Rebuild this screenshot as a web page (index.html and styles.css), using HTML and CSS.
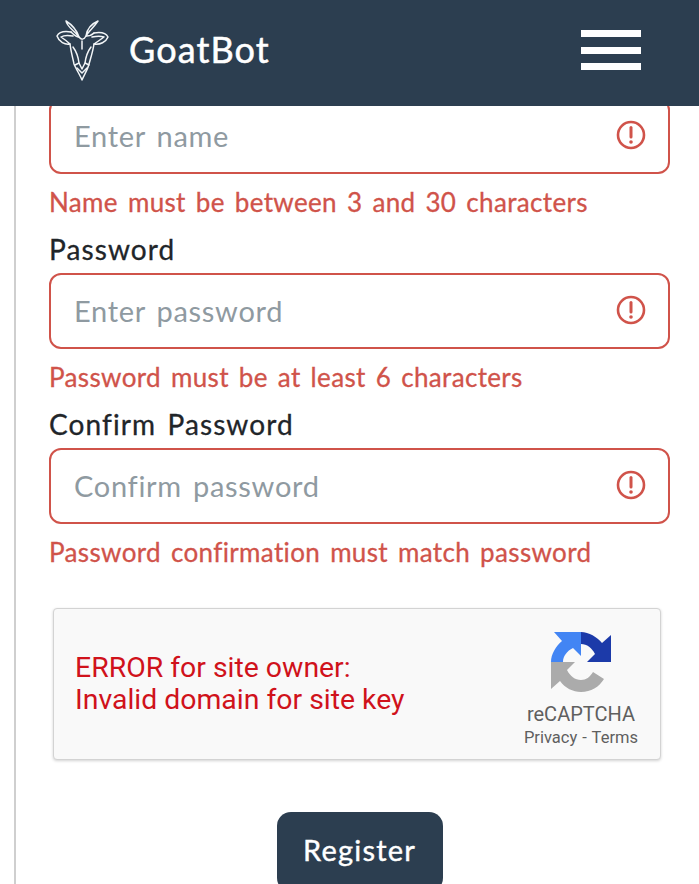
FILE: index.html
```html
<!DOCTYPE html>
<html lang="en">
<head>
<meta charset="utf-8">
<title>GoatBot</title>
<link rel="stylesheet" href="styles.css">
</head>
<body>
<header class="topbar">
  <a class="brand">
    <svg class="goat" viewBox="0 0 53 62" fill="none" stroke="#f2f5f7" stroke-width="1.5" stroke-linejoin="round" stroke-linecap="round">
      <path d="M10 2C11 8 18 11 23 18C21 12 18 7 10 2Z"/>
      <path d="M42 2C35 5 31 10 30 17C33 12 38 8 42 2Z"/>
      <path d="M15 13C9 12 3 13 1 17C3 23 9 26 14 25C11 22 8 20 5 18C8 16 12 16 17 17"/>
      <path d="M38 14C44 13 50 14 52 18C50 23 44 26 38 25C41 23 44 21 48 18C45 17 41 17 36 18"/>
      <path d="M15 13C18 16 21 18 23 18C25 21 28 21 30 17C33 17 36 16 38 14"/>
      <path d="M14 25C15 33 17 40 18 45C20 50 24 56 26 61C28 56 32 50 33 45C35 38 37 32 38 25"/>
      <path d="M17 28C20 32 22 36 23 44L19 46M35 28C32 32 30 36 29 44L33 46"/>
      <path d="M23 44L26 50L29 44M21 49L26 54L31 49M26 22V30"/>
    </svg>
    <span class="brand-name">GoatBot</span>
  </a>
  <button class="burger" aria-label="Menu"><span></span><span></span><span></span></button>
</header>
<main class="page">
  <form class="form">
    <div class="field field-first">
      <div class="input-wrap">
        <span class="placeholder">Enter name</span>
        <svg class="alert" viewBox="0 0 30 30"><circle cx="15" cy="15" r="13" fill="none" stroke="#d0534a" stroke-width="2.6"/><path d="M15 7.5V17" stroke="#d0534a" stroke-width="3" stroke-linecap="round"/><circle cx="15" cy="22" r="1.8" fill="#d0534a"/></svg>
      </div>
      <p class="error">Name must be between 3 and 30 characters</p>
    </div>
    <div class="field">
      <label class="label">Password</label>
      <div class="input-wrap">
        <span class="placeholder">Enter password</span>
        <svg class="alert" viewBox="0 0 30 30"><circle cx="15" cy="15" r="13" fill="none" stroke="#d0534a" stroke-width="2.6"/><path d="M15 7.5V17" stroke="#d0534a" stroke-width="3" stroke-linecap="round"/><circle cx="15" cy="22" r="1.8" fill="#d0534a"/></svg>
      </div>
      <p class="error">Password must be at least 6 characters</p>
    </div>
    <div class="field">
      <label class="label">Confirm Password</label>
      <div class="input-wrap">
        <span class="placeholder">Confirm password</span>
        <svg class="alert" viewBox="0 0 30 30"><circle cx="15" cy="15" r="13" fill="none" stroke="#d0534a" stroke-width="2.6"/><path d="M15 7.5V17" stroke="#d0534a" stroke-width="3" stroke-linecap="round"/><circle cx="15" cy="22" r="1.8" fill="#d0534a"/></svg>
      </div>
      <p class="error">Password confirmation must match password</p>
    </div>
    <div class="captcha">
      <p class="captcha-error">ERROR for site owner:<br>Invalid domain for site key</p>
      <div class="captcha-brand">
        <svg class="captcha-logo" viewBox="0 0 60 60">
          <path fill="#ababab" d="M30 60C22 60 14 56 9 49L0 57V30H24L16 38C19 44 24 48 30 48C35 48 39 45 42 40L53 47C48 55 40 60 30 60Z"/>
          <path fill="#4285f4" d="M0 30C0 22 5 14 11 9L3 0H30V24L22 16C16 19 12 24 12 30Z"/>
          <path fill="#1c3aa9" d="M30 0C38 0 46 5 51 11L60 3V30H36L44 22C41 16 36 12 30 12Z"/>
        </svg>
        <span class="captcha-name">reCAPTCHA</span>
        <span class="captcha-links">Privacy - Terms</span>
      </div>
    </div>
    <div class="actions">
      <button class="register" type="button">Register</button>
    </div>
  </form>
</main>
</body>
</html>
```
FILE: styles.css
```css
html, body {
  margin: 0;
  padding: 0;
  height: 884px;
  overflow: hidden;
  background: #fff;
  font-family: "Lato", "Liberation Sans", sans-serif;
}
.topbar {
  position: fixed;
  top: 0;
  left: 0;
  right: 0;
  height: 106px;
  background: #2c3e50;
  box-sizing: border-box;
  padding: 0 58px 6px 56px;
  display: flex;
  align-items: center;
  justify-content: space-between;
  z-index: 2;
}
.brand {
  display: flex;
  align-items: center;
  gap: 20px;
}
.goat {
  width: 53px;
  height: 62px;
  display: block;
  margin-top: -1px;
}
.brand-name {
  color: #fff;
  font-size: 36px;
  letter-spacing: 1.1px;
  -webkit-text-stroke: 0.5px #fff;
  margin-top: -3px;
}
.burger {
  width: 60px;
  display: flex;
  flex-direction: column;
  gap: 9.5px;
  padding: 0;
  border: 0;
  background: none;
}
.burger span {
  display: block;
  height: 7px;
  background: #fff;
}
.page {
  margin-left: 14px;
  border-left: 2px solid #cfcfcf;
  height: 884px;
  box-sizing: border-box;
  padding: 98px 29px 0 33px;
}
.field {
  display: flex;
  flex-direction: column;
}
.input-wrap {
  height: 76px;
  box-sizing: border-box;
  border: 2px solid #d0534a;
  border-radius: 12px;
  padding: 0 22px 0 23px;
  display: flex;
  align-items: center;
  justify-content: space-between;
}
.placeholder {
  color: #8f9aa1;
  font-size: 29px;
  letter-spacing: 0.7px;
  word-spacing: 3px;
  margin-top: -2px;
}
.alert {
  width: 30px;
  height: 30px;
  display: block;
  margin-top: -2px;
}
.error {
  margin: 11px 0 0;
  height: 34px;
  line-height: 34px;
  color: #d0534a;
  font-size: 26px;
  letter-spacing: 0.35px;
  word-spacing: 3px;
  white-space: nowrap;
  -webkit-text-stroke: 0.3px #d0534a;
}
.label {
  margin-top: 14px;
  height: 32px;
  line-height: 32px;
  margin-bottom: 8px;
  color: #212529;
  font-size: 28px;
  letter-spacing: 1.1px;
  word-spacing: 3px;
  display: block;
  -webkit-text-stroke: 0.3px #212529;
}
.captcha {
  margin: 39px 9px 0 4px;
  height: 152px;
  box-sizing: border-box;
  background: #f9f9f9;
  border: 1px solid #d3d3d3;
  border-radius: 4px;
  box-shadow: 0 1px 3px rgba(0, 0, 0, .18);
  padding: 0 22px 0 21px;
  display: flex;
  align-items: center;
  justify-content: space-between;
}
.captcha-error {
  margin: 0;
  color: #d0121b;
  font-family: Roboto, "Liberation Sans", sans-serif;
  font-size: 28.4px;
  line-height: 32.5px;
}
.captcha-brand {
  display: flex;
  flex-direction: column;
  align-items: center;
  font-family: Roboto, "Liberation Sans", sans-serif;
  color: #5f5f5f;
  margin-top: 12px;
}
.captcha-logo {
  width: 60px;
  height: 60px;
  display: block;
  margin-bottom: 10px;
}
.captcha-name {
  font-size: 20px;
  line-height: 24px;
}
.captcha-links {
  font-size: 16.5px;
  line-height: 23px;
  word-spacing: 1px;
}
.actions {
  display: flex;
  justify-content: center;
  margin-top: 52px;
}
.register {
  width: 166px;
  height: 80px;
  padding: 0 0 6px;
  border: 0;
  border-radius: 14px;
  background: #2c3e50;
  color: #fff;
  font-family: "Lato", "Liberation Sans", sans-serif;
  font-size: 29px;
  letter-spacing: 1.2px;
  -webkit-text-stroke: 0.4px #fff;
}
```
